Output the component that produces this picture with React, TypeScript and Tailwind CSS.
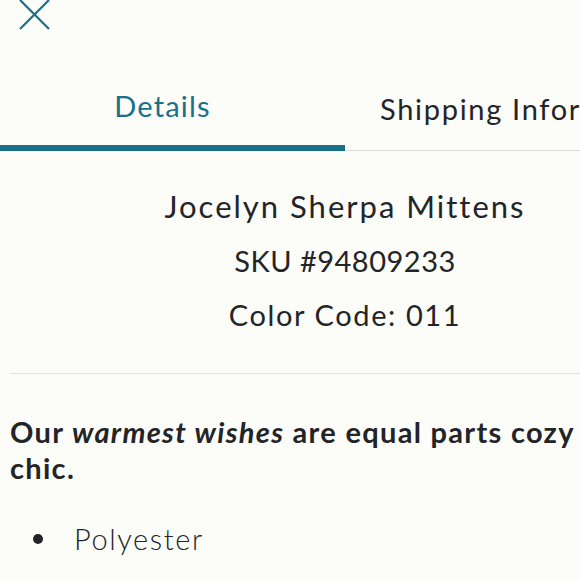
export default function App() {
  return (
    <div className="w-[580px] h-[580px] overflow-hidden bg-[#fcfcf8] text-[#232428]" style={{ fontFamily: "Lato, 'Noto Sans', sans-serif" }}>
      {/* close */}
      <div className="h-[62px] pl-[19px]">
        <svg width="31" height="31" viewBox="0 0 31 31" className="-mt-[1px] text-[#17718a]">
          <path d="M1 1 L30 30 M30 1 L1 30" stroke="currentColor" strokeWidth="2.2" fill="none" />
        </svg>
      </div>

      {/* tabs */}
      <div className="flex w-[800px] border-b border-[#dedede]">
        <div className="w-[345px] h-[90px] flex items-center justify-center pr-[20px] text-[29px] text-[#17718a] border-b-[6px] border-[#17718a] -mb-px pt-[6px] tracking-[1.2px]">
          Details
        </div>
        <div className="flex-1 h-[89px] flex items-center pl-[35px] text-[29px] pt-[6px] tracking-[1.7px] whitespace-nowrap">
          Shipping Information
        </div>
      </div>

      {/* product */}
      <div className="w-[690px] flex flex-col items-center pt-[35px] pb-[38px]">
        <h1 className="text-[31px] leading-[40px] tracking-[2px]">Jocelyn Sherpa Mittens</h1>
        <p className="text-[29px] leading-[40px] mt-[15px] tracking-[0.5px]">SKU #94809233</p>
        <p className="text-[29px] leading-[40px] mt-[14px] tracking-[1.6px]">Color Code: 011</p>
      </div>

      <div className="ml-[10px] border-t border-[#e2e2e2]" />

      <div className="pl-[10px] pt-[40px]">
        <p className="text-[29px] leading-[36px] font-bold tracking-[1.3px] w-[572px]">
          Our <em className="italic">warmest wishes</em> are equal parts cozy chic.
        </p>
        <ul className="mt-[33px] pl-[23px]">
          <li className="flex items-center gap-[31px] text-[29px] font-light leading-[40px] tracking-[1.6px]">
            <span className="w-[10px] h-[10px] rounded-full bg-[#232428]" />
            Polyester
          </li>
        </ul>
      </div>
    </div>
  );
}
